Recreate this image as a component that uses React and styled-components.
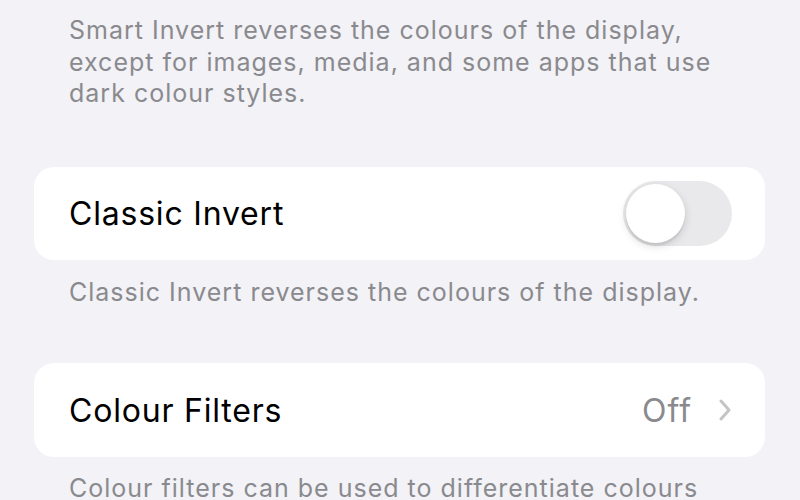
import React from "react";
import styled, { createGlobalStyle } from "styled-components";

const Global = createGlobalStyle`
  html, body { margin: 0; padding: 0; background: #f2f2f7; }
  body { font-family: Inter, "Noto Sans", "Liberation Sans", sans-serif; -webkit-font-smoothing: antialiased; }
`;

const Page = styled.div`
  width: 800px;
  height: 500px;
  overflow: hidden;
  box-sizing: border-box;
  padding: 15px 35px 0 34px;
  display: flex;
  flex-direction: column;
  background: #f2f2f7;
`;

const Footer = styled.p`
  flex-shrink: 0;
  margin: ${(p) => p.$mt || 0}px 0 0 0;
  padding: 0 40px 0 35px;
  font-size: 25px;
  line-height: 31.5px;
  color: #8a8a8e;
  letter-spacing: 1px;
`;

const Card = styled.div`
  flex-shrink: 0;
  margin-top: ${(p) => p.$mt || 0}px;
  height: ${(p) => p.$h || 93}px;
  background: #ffffff;
  border-radius: 20px;
  display: flex;
  align-items: center;
  padding: 0 33px 0 35px;
`;

const Title = styled.span`
  flex: 1;
  font-size: 32px;
  color: #000;
  letter-spacing: 0.8px;
`;

const Value = styled.span`
  font-size: 32px;
  color: #8a8a8e;
  letter-spacing: 1px;
  margin-right: 26px;
`;

const Track = styled.div`
  width: 109px;
  height: 65px;
  border-radius: 33px;
  background: #e9e9eb;
  display: flex;
  align-items: center;
  padding: 0 3px;
  box-sizing: border-box;
`;

const Knob = styled.div`
  width: 59px;
  height: 59px;
  border-radius: 50%;
  background: #fff;
  box-shadow: 0 3px 8px rgba(0, 0, 0, 0.15), 0 3px 1px rgba(0, 0, 0, 0.06);
`;

const Chevron = () => (
  <svg width="14" height="22" viewBox="0 0 14 22" style={{ display: "block" }}>
    <polyline
      points="3,2 11,11 3,20"
      fill="none"
      stroke="#c4c4c7"
      strokeWidth="3"
      strokeLinecap="round"
      strokeLinejoin="round"
    />
  </svg>
);

export default function App() {
  return (
    <>
      <Global />
      <Page>
        <Footer>
          Smart Invert reverses the colours of the display, except for images,
          media, and some apps that use dark colour styles.
        </Footer>
        <Card $mt={57} $h={93}>
          <Title>Classic Invert</Title>
          <Track>
            <Knob />
          </Track>
        </Card>
        <Footer $mt={17}>Classic Invert reverses the colours of the display.</Footer>
        <Card $mt={55} $h={94}>
          <Title>Colour Filters</Title>
          <Value>Off</Value>
          <Chevron />
        </Card>
        <Footer $mt={16}>
          Colour filters can be used to differentiate colours by users who are
          colour blind and aid users who have difficulty reading text on the
          display.
        </Footer>
      </Page>
    </>
  );
}
